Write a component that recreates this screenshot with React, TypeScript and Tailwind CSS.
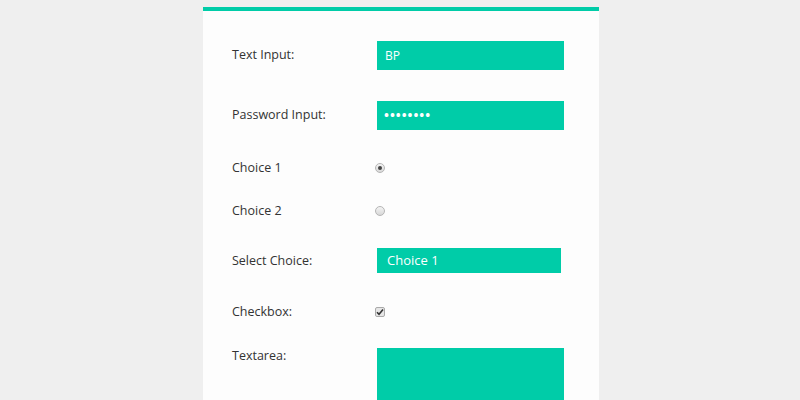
import React from 'react'

const font = { fontFamily: '"Open Sans", "DejaVu Sans", sans-serif' }

function Radio({ checked }: { checked?: boolean }) {
  return (
    <span className="-ml-[2px] flex h-[10px] w-[10px] items-center justify-center rounded-full border border-[#b5b5b5] bg-gradient-to-b from-[#f4f4f4] to-[#d8d8d8]">
      {checked && <span className="h-[4px] w-[4px] rounded-full bg-[#444]" />}
    </span>
  )
}

function Checkbox() {
  return (
    <span className="-ml-[2px] flex h-[10px] w-[10px] items-center justify-center rounded-[2px] border border-[#aaa] bg-[#e6e6e6]">
      <svg width="8" height="8" viewBox="0 0 8 8">
        <path d="M1 4.2 L3 6.2 L7 1.5" fill="none" stroke="#333" strokeWidth="1.6" />
      </svg>
    </span>
  )
}

export default function App() {
  return (
    <div className="h-[400px] w-[800px] overflow-hidden bg-[#efefef] text-[12.5px] text-[#333]" style={font}>
      <div className="ml-[203px] mt-[7px] h-[400px] w-[396px] border-t-4 border-[#00cca8] bg-[#fdfdfd] pl-[29px] pt-[30px]">
        {/* text input */}
        <div className="flex h-[29px] items-center">
          <label className="w-[145px]">Text Input:</label>
          <div className="flex h-[29px] w-[187px] items-center bg-[#00cca8] pl-[8px] text-[12px] font-medium text-white">BP</div>
        </div>
        {/* password */}
        <div className="mt-[31px] flex h-[29px] items-center">
          <label className="w-[145px]">Password Input:</label>
          <div className="flex h-[29px] w-[187px] items-center bg-[#00cca8] pl-[7px] text-[13px] font-bold tracking-[1px] text-white">••••••••</div>
        </div>
        {/* radios */}
        <div className="mt-[28px] flex h-[20px] items-center">
          <label className="w-[145px]">Choice 1</label>
          <Radio checked />
        </div>
        <div className="mt-[23px] flex h-[20px] items-center">
          <label className="w-[145px]">Choice 2</label>
          <Radio />
        </div>
        {/* select */}
        <div className="mt-[27px] flex h-[25px] items-center">
          <label className="mt-[1px] w-[145px]">Select Choice:</label>
          <div className="flex h-[25px] w-[184px] items-center bg-[#00cca8] pl-[10px] pt-[1px] text-[13px] text-white">Choice 1</div>
        </div>
        {/* checkbox */}
        <div className="mt-[29px] flex h-[20px] items-center">
          <label className="w-[145px]">Checkbox:</label>
          <Checkbox />
        </div>
        {/* textarea */}
        <div className="mt-[26px] flex items-start">
          <label className="-mt-[1px] w-[145px]">Textarea:</label>
          <div className="h-[80px] w-[187px] bg-[#00cca8]" />
        </div>
      </div>
    </div>
  )
}
